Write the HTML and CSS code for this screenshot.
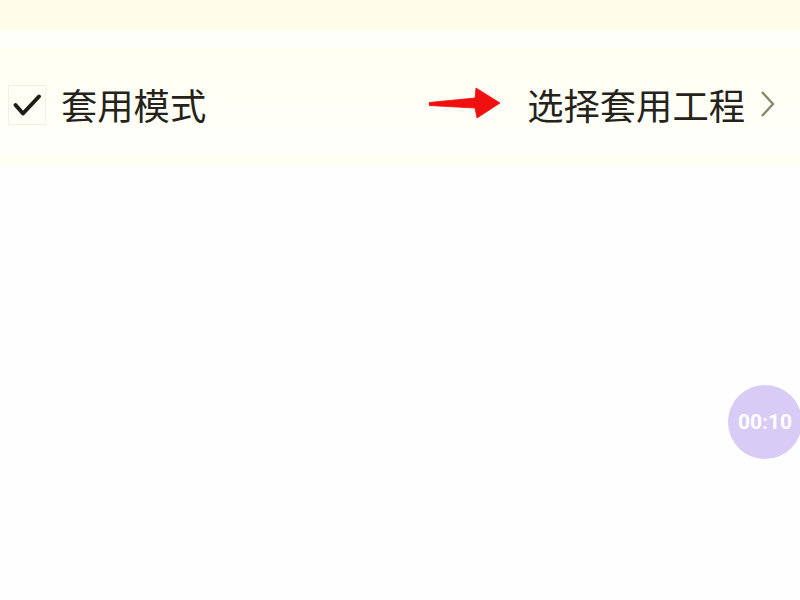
FILE: index.html
```html
<!DOCTYPE html>
<html lang="zh">
<head>
<meta charset="utf-8">
<link rel="stylesheet" href="styles.css">
</head>
<body>
<div class="top-band"></div>
<div class="spacer"></div>
<div class="row">
  <div class="left">
    <span class="checkbox">
      <svg width="30" height="26" viewBox="0 0 30 26"><path d="M3.5 13 L11 21.5 L27 4.5" fill="none" stroke="#1d1d16" stroke-width="4" stroke-linecap="round" stroke-linejoin="round"/></svg>
    </span>
    <span class="label">套用模式</span>
  </div>
  <div class="right">
    <svg class="arrow" width="72" height="34" viewBox="0 0 72 34"><path d="M0 16.5 L46 12 L47 2 L71 17 L48 32 L46 22 L0 19.5 Z" fill="#f01010" stroke="#f01010" stroke-width="0.8" stroke-linejoin="round"/></svg>
    <span class="label">选择套用工程</span>
    <svg class="chev" width="16" height="28" viewBox="0 0 16 28"><path d="M2 2 L13 14 L2 26" fill="none" stroke="#8c876c" stroke-width="2.4"/></svg>
  </div>
</div>
<div class="timer">00:10</div>
</body>
</html>
```
FILE: styles.css
```css
html, body {
  margin: 0;
  padding: 0;
  background: #fefefe;
  width: 800px;
  height: 600px;
  overflow: hidden;
  font-family: "Noto Sans CJK SC", "Noto Sans", sans-serif;
}
.top-band {
  height: 30px;
  background: #fefeea;
}
.spacer {
  height: 18px;
  background: #fefefb;
}
.row {
  height: 118px;
  background: linear-gradient(#fffff2, #fffffa 85%, #fffff0);
  display: flex;
  align-items: center;
  justify-content: space-between;
  padding: 0 24px 5px 8px;
  box-sizing: border-box;
}
.left, .right {
  display: flex;
  align-items: center;
}
.checkbox {
  width: 38px;
  height: 40px;
  border: 1px solid #f2f0e2;
  box-sizing: border-box;
  display: flex;
  align-items: center;
  justify-content: center;
  margin-right: 15px;
}
.label {
  font-size: 36.3px;
  color: #24221a;
  line-height: 1;
}
.arrow {
  margin-right: 26px;
  margin-top: -3px;
}
.chev {
  margin-left: 15px;
}
.timer {
  position: absolute;
  left: 728px;
  top: 385px;
  width: 74px;
  height: 74px;
  border-radius: 50%;
  background: #d8cbf6;
  color: #ffffff;
  font-family: Roboto, "Liberation Sans", sans-serif;
  font-weight: bold;
  font-size: 21px;
  display: flex;
  align-items: center;
  justify-content: center;
}
```
